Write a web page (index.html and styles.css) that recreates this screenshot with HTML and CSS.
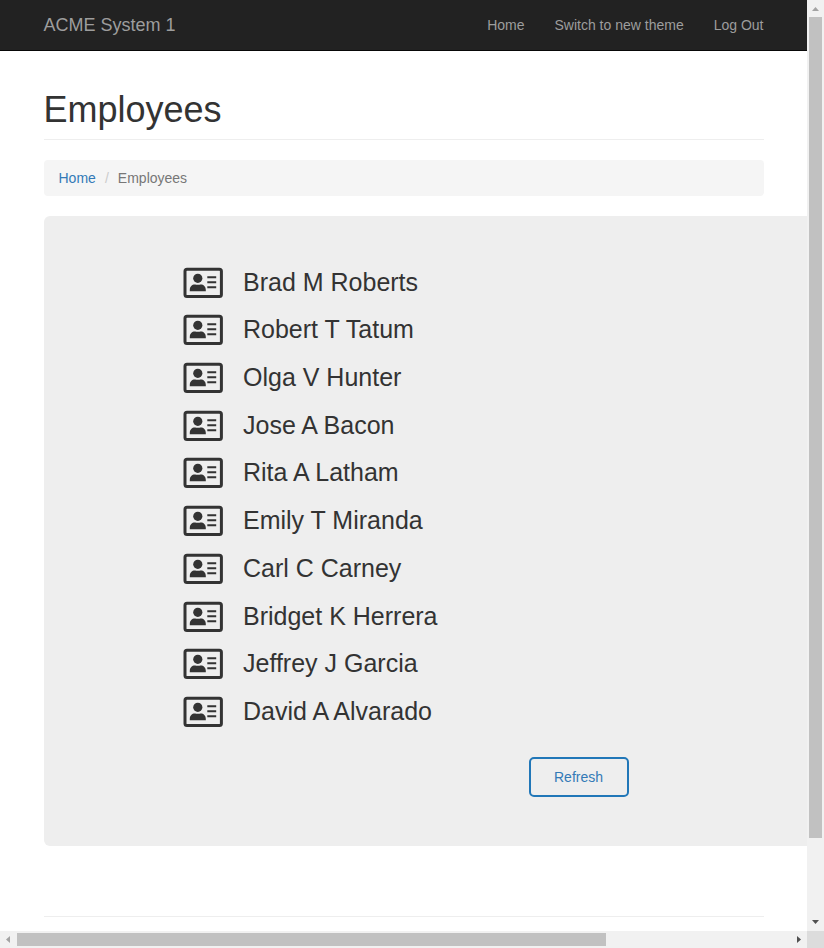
FILE: index.html
```html
<!DOCTYPE html>
<html lang="en">
<head>
<meta charset="utf-8">
<title>Employees - ACME System 1</title>
<link rel="stylesheet" href="styles.css">
</head>
<body>
<svg class="defs" aria-hidden="true">
  <symbol id="card" viewBox="0 0 40 31">
    <rect x="2" y="2.200" width="36.400" height="27.200" rx="2" fill="none" stroke="currentColor" stroke-width="3"/>
    <circle cx="14.800" cy="11.300" r="4.600" fill="currentColor"/>
    <path d="M6.800 24.300v-1.500c0-3.400 2.300-5.400 5-5.400.8 0 1.500.3 3 .3s2.200-.3 3-.3c2.700 0 5 2 5 5.400v1.500z" fill="currentColor"/>
    <path d="M24.300 10.300h8.900M24.300 15.200h8.900M24.300 20.200h8.900" stroke="currentColor" stroke-width="2"/>
  </symbol>
</svg>
<div class="window">
  <div class="view">
    <nav class="navbar">
      <a class="brand">ACME System 1</a>
      <div class="links"><a>Home</a><a>Switch to new theme</a><a>Log Out</a></div>
    </nav>
    <main class="content">
      <h1>Employees</h1>
      <div class="breadcrumb"><a>Home</a><span class="sep">/</span><span>Employees</span></div>
      <section class="panel">
        <ul class="people">
          <li><svg><use href="#card"/></svg><span>Brad M Roberts</span></li>
          <li><svg><use href="#card"/></svg><span>Robert T Tatum</span></li>
          <li><svg><use href="#card"/></svg><span>Olga V Hunter</span></li>
          <li><svg><use href="#card"/></svg><span>Jose A Bacon</span></li>
          <li><svg><use href="#card"/></svg><span>Rita A Latham</span></li>
          <li><svg><use href="#card"/></svg><span>Emily T Miranda</span></li>
          <li><svg><use href="#card"/></svg><span>Carl C Carney</span></li>
          <li><svg><use href="#card"/></svg><span>Bridget K Herrera</span></li>
          <li><svg><use href="#card"/></svg><span>Jeffrey J Garcia</span></li>
          <li><svg><use href="#card"/></svg><span>David A Alvarado</span></li>
        </ul>
        <button class="refresh">Refresh</button>
      </section>
      <hr>
    </main>
  </div>
  <div class="vbar">
    <svg class="arrow" viewBox="0 0 17 17"><path d="M5 11l3.500-4 3.500 4z" fill="#a3a3a3"/></svg>
    <div class="vthumb"></div>
    <svg class="arrow end" viewBox="0 0 17 17"><path d="M5 6l3.500 4 3.500-4z" fill="#505050"/></svg>
  </div>
  <div class="hbar">
    <svg class="arrow" viewBox="0 0 17 17"><path d="M10 5l-4 3.500 4 3.500z" fill="#a3a3a3"/></svg>
    <div class="hthumb"></div>
    <svg class="arrow end" viewBox="0 0 17 17"><path d="M7 5l4 3.500-4 3.500z" fill="#505050"/></svg>
  </div>
  <div class="corner"></div>
</div>
</body>
</html>
```
FILE: styles.css
```css
* { box-sizing: border-box; }
body { margin: 0; overflow: hidden; background: #fff; color: #333; font: 14px/20px "Liberation Sans", Arial, sans-serif; }
.defs { display: none; }
.window { display: grid; grid-template: 931px 17px / 807px 17px; width: 824px; height: 948px; }
.view { overflow: hidden; }
.navbar { display: flex; justify-content: space-between; align-items: center; height: 51px; padding: 0 43.5px; background: #222; border-bottom: 1px solid #080808; color: #9d9d9d; }
.brand { font-size: 18px; }
.links { display: flex; gap: 30px; }
.content { padding: 39px 43.5px 0; }
h1 { margin: 0 0 20px; height: 50px; font-size: 36px; font-weight: 400; line-height: 40px; border-bottom: 1px solid #eee; }
.breadcrumb { display: flex; height: 36px; padding: 8px 15px; background: #f5f5f5; border-radius: 4px; color: #777; }
.breadcrumb a { color: #337ab7; }
.sep { width: 22px; text-align: center; color: #ccc; }
.panel { width: 1070px; height: 630px; margin-top: 20px; padding: 42.22px 0 0 139.5px; background: #eee; border-radius: 6px; }
.people { list-style: none; margin: 0; padding: 0; }
.people li { display: flex; align-items: center; gap: 20px; height: 47.72px; font-size: 25px; line-height: 30px; }
.people span { padding-bottom: 1px; }
.people svg { width: 40px; height: 31px; }
.refresh { display: block; width: 100px; height: 40px; margin: 21.58px 0 0 345.5px; border: 2px solid #2177b8; border-radius: 5px; background: transparent; color: #337ab7; font: inherit; }
hr { margin: 70px 0 0; border: 0; border-top: 1px solid #eee; }
.vbar, .hbar { display: flex; background: #f1f1f1; }
.vbar { flex-direction: column; }
.arrow { flex: none; width: 17px; height: 17px; }
.end { margin-top: auto; }
.hbar .end { margin: 0 0 0 auto; }
.vthumb { width: 13px; height: 821px; margin: 0 2px; background: #c1c1c1; }
.hthumb { width: 589px; height: 13px; margin: 2px 0; background: #c1c1c1; }
.corner { background: #dcdcdc; }
```
